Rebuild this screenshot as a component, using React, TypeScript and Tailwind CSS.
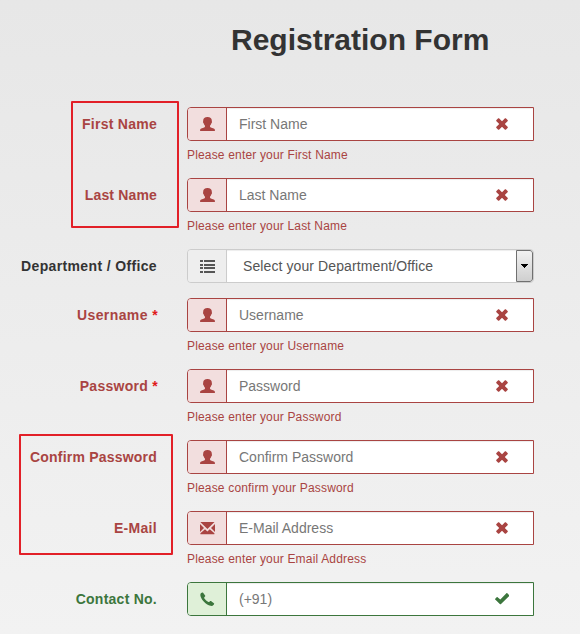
import React from "react";

type IconName = "user" | "list" | "mail" | "phone";
type Tone = "error" | "success" | "plain";

interface Field {
  label: string;
  labelSpacing: string;
  placeholder: string;
  icon: IconName;
  tone: Tone;
  required?: boolean;
  help?: string;
  select?: boolean;
}

const fields: Field[] = [
  { label: "First Name", labelSpacing: "tracking-[0.26px]", placeholder: "First Name", icon: "user", tone: "error", help: "Please enter your First Name" },
  { label: "Last Name", labelSpacing: "tracking-[0.16px]", placeholder: "Last Name", icon: "user", tone: "error", help: "Please enter your Last Name" },
  { label: "Department / Office", labelSpacing: "tracking-[0.36px]", placeholder: "Select your Department/Office", icon: "list", tone: "plain", select: true },
  { label: "Username", labelSpacing: "tracking-[0.4px]", placeholder: "Username", icon: "user", tone: "error", required: true, help: "Please enter your Username" },
  { label: "Password", labelSpacing: "tracking-[0.28px]", placeholder: "Password", icon: "user", tone: "error", required: true, help: "Please enter your Password" },
  { label: "Confirm Password", labelSpacing: "tracking-[0.21px]", placeholder: "Confirm Password", icon: "user", tone: "error", help: "Please confirm your Password" },
  { label: "E-Mail", labelSpacing: "tracking-[0.3px]", placeholder: "E-Mail Address", icon: "mail", tone: "error", help: "Please enter your Email Address" },
  { label: "Contact No.", labelSpacing: "tracking-[0.25px]", placeholder: "(+91)", icon: "phone", tone: "success" },
];

const labelTone: Record<Tone, string> = {
  error: "text-[#a94442]",
  success: "text-[#3c763d]",
  plain: "text-[#333333]",
};
const borderTone: Record<Tone, string> = {
  error: "border-[#a94442]",
  success: "border-[#3c763d]",
  plain: "border-[#cccccc]",
};
const addonTone: Record<Tone, string> = {
  error: "bg-[#f2dede] text-[#a94442]",
  success: "bg-[#dff0d8] text-[#3c763d]",
  plain: "bg-[#eeeeee] text-[#555555]",
};

function AddonIcon({ name }: { name: IconName }) {
  return (
    <svg width="15" height="14" viewBox="0 0 15 14" fill="currentColor" aria-hidden="true">
      {name === "user" && (
        <path d="M7.500 0C10.300 0 11.800 1.300 11.800 3.500c0 .5 0 .8.200 1.200.1.600-.1 1.200-.6 1.500-.2 1-.7 1.800-1.400 2.500v.8c0 .5.3.8.8 1l2.900 1c.8.300 1.200.7 1.200 1.400V14H.1v-1.100c0-.7.400-1.100 1.200-1.400l2.900-1c.5-.2.800-.5.800-1v-.8C4.300 8 3.800 7.200 3.600 6.200c-.5-.3-.7-.9-.6-1.500.2-.4.2-.7.2-1.200C3.200 1.300 4.700 0 7.500 0Z" />
      )}
      {name === "list" && (
        <path d="M0 1h3v2H0zM4 1h11v2H4zM0 5h3v2H0zM4 5h11v2H4zM0 8h3v2H0zM4 8h11v2H4zM0 12h3v2H0zM4 12h11v2H4z" />
      )}
      {name === "mail" && (
        <path d="M.3 1h14.200L7.400 7.900ZM0 2.900l4 4L0 10.900ZM15 2.900v8l-4-4ZM5 8.200l2.400 2.200 2.400-2.200 4.600 4v1H.4v-1Z" />
      )}
      {name === "phone" && (
        <path d="M.9 1.300C1.600.6 2.500.3 3.100.7l2 2.900c.3.400.2.700-.1 1l-.8.900c-.2.400.1.800.4 1.200 1 1.300 2 2.200 3.400 3.100.4.300.8.400 1.100.2l.9-.8c.3-.3.700-.3 1-.1l2.900 2.100c.5.400.3 1-.2 1.500-.9 1-2 1.500-3.300 1.100C6.100 12.500 2.200 8.700.7 4.700.2 3.500.2 2.200.9 1.300Z" />
      )}
    </svg>
  );
}

function StatusIcon({ tone }: { tone: Tone }) {
  return (
    <svg width="14" height="14" viewBox="0 0 14 14" fill="currentColor" aria-hidden="true">
      {tone === "error" ? (
        <path d="M3.200 1.200h.8L7 4.200l3-3h.8l2 2V4L9.800 7l3 3v.8l-2 2H10l-3-3-3 3h-.8l-2-2V10l3-3-3-3v-.8Z" />
      ) : (
        <path d="M12.300 1.300 14.200 3.200c.3.300.3.600 0 .9L6 12c-.4.400-.8.400-1.200 0L.2 7.600c-.3-.3-.3-.6 0-.9l1.500-1.500c.3-.3.600-.3.900 0L5.300 7.600l6.100-6.300c.3-.3.600-.3.900 0Z" />
      )}
    </svg>
  );
}

function FormRow({ field }: { field: Field }) {
  const { tone } = field;
  return (
    <div className="flex">
      <label
        className={`shrink-0 whitespace-nowrap pt-[7px] text-right text-[14px] font-bold leading-5 ${labelTone[tone]} ${field.labelSpacing} ${field.required ? "w-[158px]" : "w-[157px]"}`}
      >
        {field.label}
        {field.required && <span className="text-[#e01b1b]"> *</span>}
      </label>
      <div className="ml-auto mr-[46px] w-[347px]">
        <div className={`flex h-[34px] overflow-hidden rounded-l-[4px] border ${borderTone[tone]} ${field.select ? "rounded-r-[4px]" : ""}`}>
          <span className={`flex w-[39px] shrink-0 items-center justify-center border-r pl-px ${borderTone[tone]} ${addonTone[tone]}`}>
            <AddonIcon name={field.icon} />
          </span>
          {field.select ? (
            <div className="flex grow bg-white text-[#555555] shadow-[inset_0_1px_1px_rgba(0,0,0,0.075)]">
              <span className="grow whitespace-nowrap pl-4 pt-[6px] text-[14px] leading-5 tracking-[0.1px]">{field.placeholder}</span>
              <span className="flex w-[17px] shrink-0 items-center justify-center rounded-r-[3px] border border-[#707070] bg-gradient-to-b from-[#f2f2f2] to-[#cfcfcf]">
                <svg width="7" height="4" viewBox="0 0 7 4" shapeRendering="crispEdges">
                  <path d="M0 0h7v1H6v1H5v1H4v1H3V3H2V2H1V1H0z" fill="#000" />
                </svg>
              </span>
            </div>
          ) : (
            <div className="flex grow items-center bg-white pl-3 pr-6 shadow-[inset_0_1px_1px_rgba(0,0,0,0.075)]">
              <span className="grow whitespace-nowrap text-[14px] leading-5 text-[#777777]">{field.placeholder}</span>
              <span className={labelTone[tone]}>
                <StatusIcon tone={tone} />
              </span>
            </div>
          )}
        </div>
        {field.help && (
          <small className="mt-[6px] block h-4 whitespace-nowrap text-[12px] leading-[17px] tracking-[0.17px] text-[#a94442]">{field.help}</small>
        )}
      </div>
    </div>
  );
}

export default function App() {
  return (
    <main className="relative h-[634px] w-[580px] overflow-hidden bg-gradient-to-b from-[#e7e7e7] to-[#f2f2f2] font-['Liberation_Sans',Arial,sans-serif]">
      <h1 className="h-[107px] pl-[231px] pt-[22px] text-[30px] font-bold leading-[36px] text-[#333333]">Registration Form</h1>
      <form className="flex flex-col gap-[15px]">
        {fields.map((field) => (
          <FormRow key={field.label} field={field} />
        ))}
      </form>
      <div className="pointer-events-none absolute left-[71px] top-[101px] h-[127px] w-[108px] rounded-[1px] border-2 border-[#e22028]" />
      <div className="pointer-events-none absolute left-[19px] top-[434px] h-[121px] w-[154px] rounded-[1px] border-2 border-[#e22028]" />
    </main>
  );
}
